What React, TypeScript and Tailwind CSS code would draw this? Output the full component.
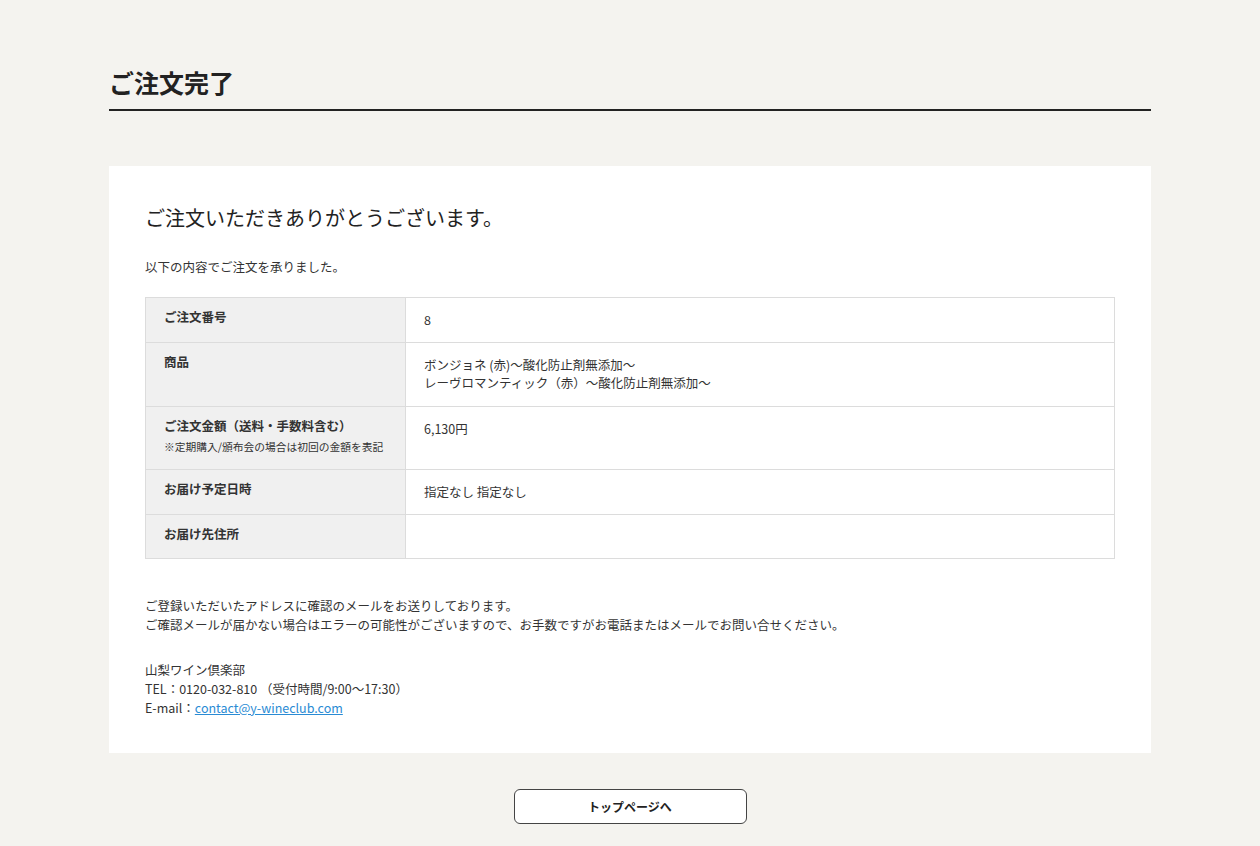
const rows: { label: string; note?: string; value: string[]; h: string }[] = [
  { label: "ご注文番号", value: ["8"], h: "h-[45px]" },
  {
    label: "商品",
    value: ["ボンジョネ (赤)〜酸化防止剤無添加〜", "レーヴロマンティック（赤）〜酸化防止剤無添加〜"],
    h: "h-[64px]",
  },
  {
    label: "ご注文金額（送料・手数料含む）",
    note: "※定期購入/頒布会の場合は初回の金額を表記",
    value: ["6,130円"],
    h: "h-[63px]",
  },
  { label: "お届け予定日時", value: ["指定なし 指定なし"], h: "h-[45px]" },
  { label: "お届け先住所", value: [], h: "h-[44px]" },
];

export default function App() {
  return (
    <div className="min-h-[846px] w-full bg-[#f4f3ef] text-[#333] font-['Noto_Sans_CJK_JP','Noto_Sans',sans-serif]">
      <div className="mx-auto w-[1042px] pt-[62px] pb-[22px]">
        <h1 className="text-[25px] font-bold leading-[40px] text-[#222] pb-[7px] border-b-2 border-[#222]">
          ご注文完了
        </h1>

        <div className="mt-[55px] bg-white px-[36px] pt-[36px] pb-[36px]">
          <h2 className="text-[20px] leading-[32px] text-[#222]">ご注文いただきありがとうございます。</h2>
          <p className="mt-[24px] text-[12.5px] leading-[18px]">以下の内容でご注文を承りました。</p>

          <table className="mt-[21px] w-full table-fixed border-collapse border border-[#dcdcdc] text-[12.5px]">
            <colgroup>
              <col className="w-[260px]" />
              <col />
            </colgroup>
            <tbody>
              {rows.map((r) => (
                <tr key={r.label} className={`border-b border-[#dcdcdc] align-top ${r.h}`}>
                  <th className="bg-[#f0f0f0] border-r border-[#dcdcdc] text-left font-bold px-[18px] pt-[9px] pb-0">
                    <div className="text-[12.5px] leading-[20px]">{r.label}</div>
                    {r.note && (
                      <div className="mt-[3px] whitespace-nowrap text-[10.75px] leading-[16px] font-normal">
                        {r.note}
                      </div>
                    )}
                  </th>
                  <td className="px-[18px] pt-[13px] pb-0 leading-[18px]">
                    {r.value.map((v) => (
                      <div key={v}>{v}</div>
                    ))}
                  </td>
                </tr>
              ))}
            </tbody>
          </table>

          <div className="mt-[37px] text-[12.5px] leading-[19px]">
            <p>ご登録いただいたアドレスに確認のメールをお送りしております。</p>
            <p>ご確認メールが届かない場合はエラーの可能性がございますので、お手数ですがお電話またはメールでお問い合せください。</p>
          </div>

          <div className="mt-[26px] text-[12.5px] leading-[19px]">
            <p>山梨ワイン倶楽部</p>
            <p>TEL：0120-032-810 （受付時間/9:00〜17:30）</p>
            <p>
              E-mail：
              <a href="#" className="text-[#2a8bd4] underline">
                contact@y-wineclub.com
              </a>
            </p>
          </div>
        </div>

        <div className="mt-[36px] flex justify-center">
          <button className="h-[35px] w-[233px] rounded-[6px] border border-[#444] bg-white text-[12px] font-bold text-[#222]">
            トップページへ
          </button>
        </div>
      </div>
    </div>
  );
}
